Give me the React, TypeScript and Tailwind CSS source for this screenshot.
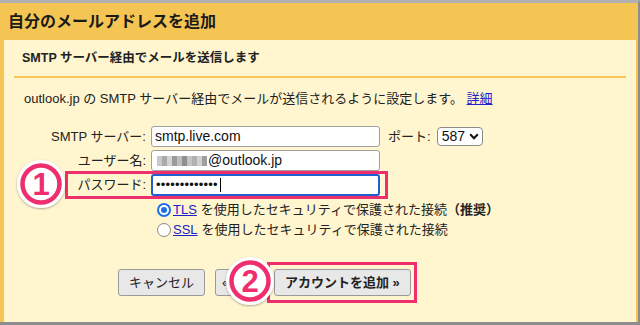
import React from "react";

const PINK = "#ee2e6d";

function Badge({ n, className }: { n: string; className: string }) {
  return (
    <div className={"absolute w-[52px] h-[52px] " + className}>
      <svg width="52" height="52" viewBox="0 0 52 52">
        <defs>
          <filter id={"sh" + n} x="-20%" y="-20%" width="140%" height="140%">
            <feDropShadow dx="0" dy="1" stdDeviation="1.2" floodColor="#000" floodOpacity="0.35" />
          </filter>
        </defs>
        <circle cx="26" cy="26" r="24" fill="#fff" filter={"url(#sh" + n + ")"} />
        <circle cx="26" cy="26" r="18.5" fill="#fff" stroke={PINK} strokeWidth="4.5" />
        <text
          x="26"
          y="37"
          textAnchor="middle"
          fontSize="31"
          fontWeight="900"
          fill={PINK}
          stroke="#fff"
          strokeWidth="1.5"
          paintOrder="stroke"
          fontFamily="'Liberation Sans', Arial, sans-serif"
        >
          {n}
        </text>
      </svg>
    </div>
  );
}

function Radio({ checked }: { checked: boolean }) {
  return checked ? (
    <span className="inline-flex w-[14px] h-[14px] rounded-full bg-[#1a6fe8] items-center justify-center shrink-0">
      <span className="w-[10px] h-[10px] rounded-full bg-white flex items-center justify-center">
        <span className="w-[6px] h-[6px] rounded-full bg-[#1a6fe8]" />
      </span>
    </span>
  ) : (
    <span className="inline-block w-[14px] h-[14px] rounded-full border border-[#8a8a8a] bg-white shrink-0" />
  );
}

export default function App() {
  const font = { fontFamily: "'Liberation Sans', Arial, 'Noto Sans CJK JP', sans-serif" };
  const mosaic = ["#c9c9c9", "#a9a9a9", "#d4d4d4", "#9b9b9b", "#bdbdbd", "#8f8f8f", "#c4c4c4", "#b0b0b0", "#d0d0d0", "#9e9e9e"];
  return (
    <div className="w-[640px] h-[325px] relative overflow-hidden text-[#222]" style={font}>
      <div className="h-full flex flex-col border-t-[3px] border-t-[#b1b1b1] border-b-[3px] border-b-[#8d8d8d] border-r-2 border-r-[#8d8d8d]">
        <div className="h-[37px] bg-[#f5c553] pl-2 flex items-center text-[16px] font-bold text-[#1a1a1a] pt-[1px]">
          自分のメールアドレスを追加
        </div>
        <div className="flex-1 bg-[#fff5cf] border-l-4 border-r-2 border-[#f5c553] flex flex-col">
          <div className="mx-[10px] pt-[9px] pb-[9px] pl-2 border-b-2 border-[#f7c75a] text-[12.5px] font-bold leading-[18px]">
            SMTP サーバー経由でメールを送信します
          </div>
          <div className="mt-[12px] pl-5 text-[13px] leading-[18px]">
            outlook.jp の SMTP サーバー経由でメールが送信されるように設定します。{" "}
            <span className="text-[#2020cc] underline">詳細</span>
          </div>

          <div className="mt-[18px] flex flex-col gap-[3px] text-[13px]">
            <div className="flex items-center h-[21px]">
              <div className="w-[143px] text-right pr-[1px]">SMTP サーバー:</div>
              <div className="ml-[4px] w-[229px] h-[21px] bg-white border border-[#a0a0a0] rounded-[3px] flex items-center pl-[3px] text-[14px] text-[#111]">
                smtp.live.com
              </div>
              <div className="ml-2">ポート:</div>
              <div className="ml-[6px] w-[46px] h-[19px] bg-white border border-[#8a8a8a] rounded-[4px] flex items-center pl-[4px] text-[14px] text-[#111]">
                587
                <svg className="ml-[4px]" width="10" height="7" viewBox="0 0 10 7">
                  <path d="M1.2 1.3 L5 5.2 L8.8 1.3" fill="none" stroke="#111" strokeWidth="2" />
                </svg>
              </div>
            </div>
            <div className="flex items-center h-[21px]">
              <div className="w-[143px] text-right pr-[1px]">ユーザー名:</div>
              <div className="ml-[4px] w-[229px] h-[21px] bg-white border border-[#a0a0a0] rounded-[3px] flex items-center pl-[5px] text-[14px] text-[#111]">
                <div className="flex h-[10px] mr-[1px]">
                  {mosaic.map((c, i) => (
                    <div key={i} className="w-[5px] h-[10px]" style={{ background: c }} />
                  ))}
                </div>
                @outlook.jp
              </div>
            </div>
            <div className="flex items-center h-[22px]">
              <div className="w-[143px] text-right pr-[1px]">パスワード:</div>
              <div className="ml-[4px] w-[229px] h-[22px] bg-white border-2 border-[#1f5fd0] rounded-[3px] flex items-center pl-[3px] text-[13px] text-[#111]">
                <span className="tracking-[0.2px]">•••••••••••••</span>
                <span className="ml-[2px] w-px h-[14px] bg-black" />
              </div>
            </div>
          </div>

          <div className="mt-[4px] flex flex-col text-[13px]">
            <div className="flex items-center h-[20px] pl-[153px]">
              <Radio checked />
              <span className="ml-[2px] text-[#2020cc] underline">TLS</span>
              <span className="ml-[4px]">を使用したセキュリティで保護された接続</span>
              <span className="font-bold">（推奨）</span>
            </div>
            <div className="flex items-center h-[20px] pl-[153px]">
              <Radio checked={false} />
              <span className="ml-[2px] text-[#2020cc] underline">SSL</span>
              <span className="ml-[4px]">を使用したセキュリティで保護された接続</span>
            </div>
          </div>

          <div className="mt-[29px] flex items-center pl-[114px] text-[13px]">
            <div className="h-[27px] px-[10px] flex items-center bg-[#e8e8e8] border border-[#9a9a9a] rounded-[3px]">
              キャンセル
            </div>
            <div className="ml-[10px] h-[27px] px-[6px] flex items-center bg-[#e8e8e8] border border-[#9a9a9a] rounded-[3px]">
              « 戻る
            </div>
            <div className="ml-[8px] h-[27px] w-[137px] justify-center flex items-center bg-[#e8e8e8] border border-[#9a9a9a] rounded-[3px] font-bold">
              アカウントを追加 »
            </div>
          </div>
        </div>
      </div>

      <div className="absolute left-[65px] top-[171px] w-[323px] h-[28px] border-[3px] border-[#ee2e6d]" />
      <div className="absolute left-[267px] top-[262px] w-[150px] h-[41px] border-[3px] border-[#ee2e6d]" />
      <Badge n="1" className="left-[15px] top-[158px]" />
      <Badge n="2" className="left-[224px] top-[255px]" />
    </div>
  );
}
